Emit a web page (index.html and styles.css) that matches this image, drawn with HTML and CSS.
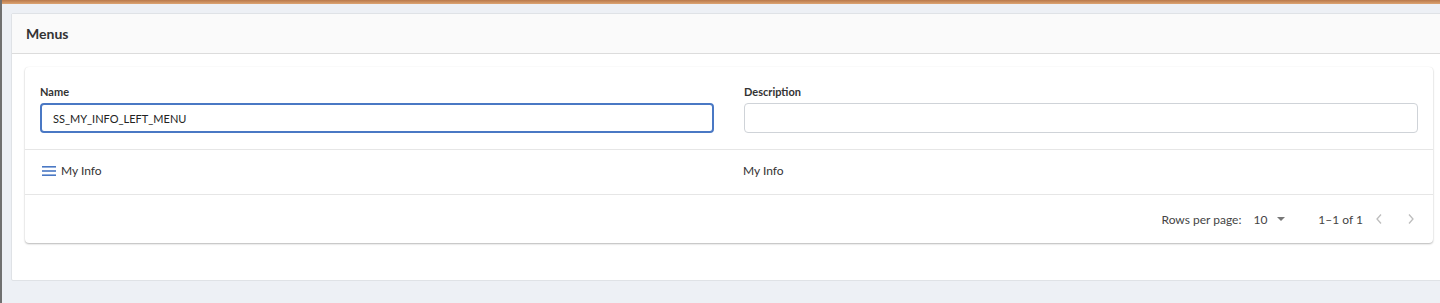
FILE: index.html
```html
<!DOCTYPE html>
<html lang="en">
<head>
  <meta charset="UTF-8" />
  <title>Menus</title>
  <link rel="stylesheet" href="styles.css">
</head>
<body>
  <div class="topbar"></div>
  <div class="page">
    <div class="panel">
      <div class="panel-header">Menus</div>
      <div class="panel-body">
        <div class="paper">
          <div class="filters">
            <div class="field">
              <label>Name</label>
              <input type="text" class="focused" value="SS_MY_INFO_LEFT_MENU" />
            </div>
            <div class="field">
              <label>Description</label>
              <input type="text" value="" />
            </div>
          </div>

          <div class="row">
            <div class="cell name">
              <svg width="14" height="10" viewBox="0 0 14 10">
                <rect x="0" y="0" width="14" height="1.6" fill="#4a78c4"/>
                <rect x="0" y="4.2" width="14" height="1.6" fill="#4a78c4"/>
                <rect x="0" y="8.4" width="14" height="1.6" fill="#4a78c4"/>
              </svg>
              <span>My Info</span>
            </div>
            <div class="cell">My Info</div>
          </div>

          <div class="pager">
            <span class="label">Rows per page:</span>
            <span class="rows">10 <span class="caret"></span></span>
            <span class="count">1–1 of 1</span>
            <svg class="arrow prev" width="8" height="12" viewBox="0 0 8 12">
              <path d="M6 1.5 L2 6 L6 10.5" fill="none" stroke="#bdbdbd" stroke-width="1.3"/>
            </svg>
            <svg class="arrow next" width="8" height="12" viewBox="0 0 8 12">
              <path d="M2 1.5 L6 6 L2 10.5" fill="none" stroke="#bdbdbd" stroke-width="1.3"/>
            </svg>
          </div>
        </div>
      </div>
    </div>
  </div>
</body>
</html>
```

FILE: styles.css
```css
* {
  box-sizing: border-box;
  font-family: Lato, "Open Sans", sans-serif;
}

body {
  margin: 0;
  background-color: #edf0f5;
  border-left: 2px solid #707070;
  height: 303px;
  overflow: hidden;
  color: #333;
}

.topbar {
  height: 4px;
  background: linear-gradient(#b9784a, #dca473);
}

.page {
  padding: 9px 0 0 9px;
}

.panel {
  margin-right: -8px;
  background: #fff;
  border: 1px solid #dfe2e6;
  border-radius: 2px;
}

.panel-header {
  height: 40px;
  line-height: 39px;
  padding-left: 14px;
  background: #fafafa;
  border-bottom: 1px solid #dcdcdc;
  font-size: 14px;
  font-weight: 700;
  color: #333;
}

.panel-body {
  padding: 13px 14px 37px 13px;
}

.paper {
  background: #fff;
  border-radius: 4px;
  box-shadow: 0 1px 2px rgba(0, 0, 0, 0.28), 0 0 1px rgba(0, 0, 0, 0.08);
  font-size: 12px;
}

.filters {
  display: grid;
  grid-template-columns: 1fr 1fr;
  gap: 30px;
  padding: 18px 15px 16px 15px;
  border-bottom: 1px solid #e6e6e6;
}

.field label {
  display: block;
  font-size: 11px;
  font-weight: 700;
  color: #333;
  margin-bottom: 5px;
}

.field input {
  width: 100%;
  height: 30px;
  border: 1px solid #cfd3d8;
  border-radius: 4px;
  padding: 0 12px;
  font-size: 11px;
  color: #222;
  outline: none;
}

.field input.focused {
  border: 2px solid #4a78c4;
  padding: 0 11px;
}

.row {
  display: grid;
  grid-template-columns: 1fr 1fr;
  gap: 30px;
  height: 45px;
  align-items: center;
  padding: 0 15px 3px 17px;
  border-bottom: 1px solid #e6e6e6;
}

.row .cell {
  color: #333;
}

.row .cell:last-child {
  margin-left: -2px;
}

.cell.name {
  display: flex;
  align-items: center;
  gap: 5px;
}

.pager {
  display: flex;
  justify-content: flex-end;
  align-items: center;
  height: 48px;
  padding-right: 18px;
  color: #444;
}

.pager .rows {
  margin-left: 12px;
  display: flex;
  align-items: center;
}

.caret {
  display: inline-block;
  margin-left: 10px;
  width: 0;
  height: 0;
  border-left: 4px solid transparent;
  border-right: 4px solid transparent;
  border-top: 4px solid #777;
}

.pager .count {
  margin-left: 33px;
}

.pager .prev {
  margin-left: 12px;
}

.pager .next {
  margin-left: 24px;
}
```
